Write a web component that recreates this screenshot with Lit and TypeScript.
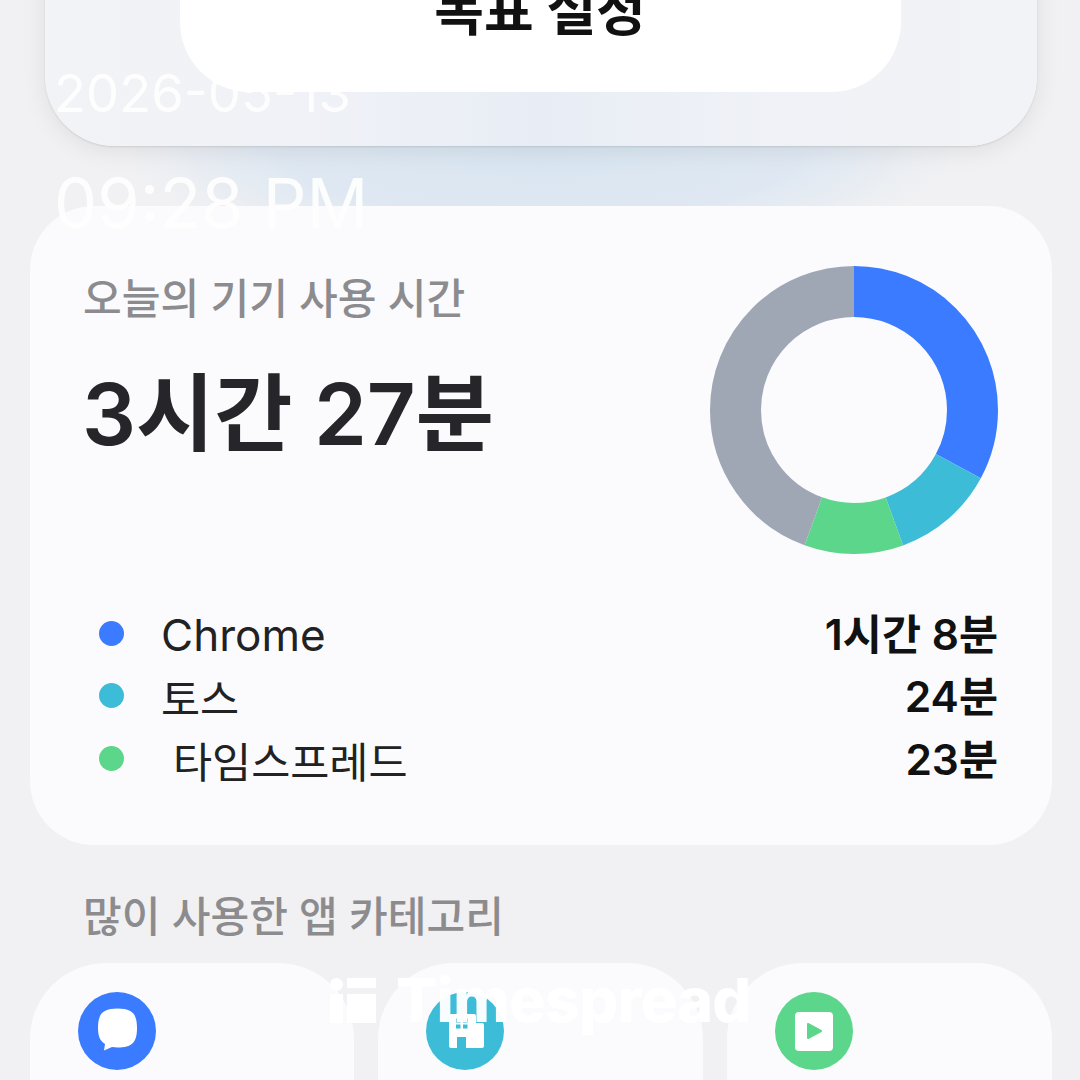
import { LitElement, html, css, svg } from 'lit';
import { customElement } from 'lit/decorators.js';

const USAGE = [
  { name: 'Chrome', time: '1시간 8분', minutes: 68, color: '#3a7bff' },
  { name: '토스', time: '24분', minutes: 24, color: '#3dbcd8' },
  { name: ' 타임스프레드', time: '23분', minutes: 23, color: '#5cd68a' },
];
const TOTAL_MINUTES = 207;
const REST_COLOR = '#9fa7b5';

@customElement('usage-donut')
export class UsageDonut extends LitElement {
  static styles = css`
    :host {
      display: block;
      width: 288px;
      height: 288px;
    }
    svg {
      display: block;
    }
  `;

  render() {
    const r = 118.5;
    const circ = 2 * Math.PI * r;
    let offset = 0;
    const rest = TOTAL_MINUTES - USAGE.reduce((s, u) => s + u.minutes, 0);
    const parts = [...USAGE, { minutes: rest, color: REST_COLOR }];
    return html`<svg width="288" height="288" viewBox="0 0 288 288">
      <g transform="rotate(-90 144 144)">
        ${parts.map((p) => {
          const len = (p.minutes / TOTAL_MINUTES) * circ;
          const seg = svg`<circle cx="144" cy="144" r="${r}" fill="none" stroke="${p.color}" stroke-width="51"
            stroke-dasharray="${len} ${circ - len}" stroke-dashoffset="${-offset}"></circle>`;
          offset += len;
          return seg;
        })}
      </g>
    </svg>`;
  }
}

@customElement('app-root')
export class AppRoot extends LitElement {
  static styles = css`
    :host {
      display: block;
      width: 1080px;
      height: 1080px;
      overflow: hidden;
      position: relative;
      background: #f1f1f3;
      font-family: Inter, 'Noto Sans CJK KR', sans-serif;
    }

    .glow {
      position: absolute;
      left: 130px;
      top: 40px;
      width: 820px;
      height: 220px;
      background: radial-gradient(ellipse at center, #d8e5f1 0%, #dfe8f2 45%, rgba(241, 241, 243, 0) 72%);
    }

    .page {
      position: relative;
      display: flex;
      flex-direction: column;
      padding: 0 28px 0 30px;
    }

    .goal-card {
      margin: -110px 15px 0;
      height: 256px;
      box-sizing: border-box;
      border-radius: 70px;
      background: linear-gradient(90deg, #f2f3f6 0%, #f0f2f7 25%, #e8edf5 50%, #f0f2f7 75%, #f2f3f6 100%);
      box-shadow: 0 1px 2px rgba(0, 0, 0, 0.1), 0 5px 24px rgba(0, 0, 0, 0.08);
      display: flex;
      justify-content: center;
    }
    .goal-btn {
      position: relative;
      z-index: 2;
      width: 721px;
      height: 202px;
      margin-left: -2px;
      border-radius: 70px;
      background: #fff;
      display: flex;
      align-items: flex-end;
      justify-content: center;
      padding-bottom: 48px;
      box-sizing: border-box;
      font-size: 54px;
      line-height: 64px;
      font-weight: 700;
      color: #111;
    }

    .usage-card {
      margin-top: 60px;
      height: 639px;
      box-sizing: border-box;
      border-radius: 64px;
      background: #fbfbfe;
      padding: 60px 54px 0;
      display: flex;
      flex-direction: column;
    }
    .usage-top {
      display: flex;
      justify-content: space-between;
    }
    .usage-title {
      padding-top: 2px;
      margin-left: -1px;
      font-size: 42.1px;
      line-height: 62px;
      font-weight: 500;
      color: #8c8c8f;
    }
    .usage-total {
      margin: 30px 0 0 -2px;
      font-size: 85px;
      line-height: 110px;
      font-weight: 600;
      color: #26262a;
    }
    .legend {
      margin-top: 48px;
      display: flex;
      flex-direction: column;
    }
    .legend-row {
      display: flex;
      align-items: center;
      height: 62.5px;
      font-size: 42.5px;
      color: #222;
    }
    .dot {
      width: 25px;
      height: 25px;
      border-radius: 50%;
      margin: 0 37px 0 15px;
    }
    .legend-name {
      flex: 1;
      padding-top: 2px;
      white-space: pre;
    }
    .legend-name.latin {
      padding-top: 4px;
      font-size: 44px;
    }
    .legend-time {
      padding-bottom: 4px;
      font-weight: 600;
      color: #111;
    }

    .section-title {
      margin: 41px 0 0 53px;
      font-size: 42.1px;
      line-height: 62px;
      font-weight: 500;
      color: #8c8c8f;
    }
    .categories {
      margin-top: 15px;
      display: grid;
      grid-template-columns: 324px 325px 1fr;
      gap: 24px;
    }
    .cat-card {
      height: 300px;
      box-sizing: border-box;
      padding: 29px 48px;
      border-radius: 76px;
      background: #fbfbfe;
    }
    .cat-icon {
      display: block;
      width: 78px;
      height: 78px;
    }

    .date,
    .time {
      position: absolute;
      left: 54px;
      z-index: 1;
      color: #fff;
      opacity: 0.92;
      font-family: Inter, sans-serif;
      white-space: nowrap;
    }
    .date {
      top: 61px;
      font-size: 52.5px;
      line-height: 64px;
    }
    .time {
      top: 160px;
      font-size: 68.5px;
      line-height: 88px;
    }
    .watermark {
      position: absolute;
      left: 330px;
      top: 968px;
      display: flex;
      align-items: center;
      gap: 20px;
      color: rgba(255, 255, 255, 0.96);
      font-family: Inter, sans-serif;
      font-weight: 800;
      font-size: 61px;
      line-height: 64px;
      letter-spacing: -0.7px;
      z-index: 3;
    }
    .watermark svg {
      display: block;
    }
  `;

  render() {
    return html`
      <div class="glow"></div>
      <div class="page">
        <div class="goal-card">
          <div class="goal-btn">목표 설정</div>
        </div>

        <div class="usage-card">
          <div class="usage-top">
            <div>
              <div class="usage-title">오늘의 기기 사용 시간</div>
              <div class="usage-total">3시간 27분</div>
            </div>
            <usage-donut></usage-donut>
          </div>
          <div class="legend">
            ${USAGE.map(
              (u) => html`<div class="legend-row">
                <span class="dot" style="background:${u.color}"></span>
                <span class="legend-name ${u.name === 'Chrome' ? 'latin' : ''}">${u.name}</span>
                <span class="legend-time">${u.time}</span>
              </div>`
            )}
          </div>
        </div>

        <div class="section-title">많이 사용한 앱 카테고리</div>
        <div class="categories">
          <div class="cat-card">
            <svg class="cat-icon" viewBox="0 0 78 78">
              <circle cx="39" cy="39" r="39" fill="#3a7bff"></circle>
              <path fill="#fff" d="M39.5 16.5C25 16.5 20 21.5 20 36c0 8 2 13 7 16l-1 6.5 8-3.5c1.5.3 3.5.5 5.5.5C54 55.5 59 50.5 59 36 59 21.5 54 16.5 39.5 16.5z"></path>
            </svg>
          </div>
          <div class="cat-card">
            <svg class="cat-icon" viewBox="0 0 78 78">
              <circle cx="39" cy="39" r="39" fill="#3dbcd8"></circle>
              <path fill="#fff" d="M25 22h23a2 2 0 0 1 2 2v7h6a2 2 0 0 1 2 2v21a2 2 0 0 1-2 2H40V45h-9v11h-6a2 2 0 0 1-2-2V24a2 2 0 0 1 2-2z"></path>
              <path fill="#3dbcd8" d="M30 26.5h4.5v4H30zM37 26.5h4.5v4H37zM30 32.5h4.5v4H30zM37 32.5h4.5v4H37z"></path>
            </svg>
          </div>
          <div class="cat-card">
            <svg class="cat-icon" viewBox="0 0 78 78">
              <circle cx="39" cy="39" r="39" fill="#5cd68a"></circle>
              <rect x="20" y="20" width="38" height="39" rx="4" fill="#fff"></rect>
              <path fill="#5cd68a" stroke="#5cd68a" stroke-width="2" stroke-linejoin="round" d="M33 32v14l13-7z"></path>
            </svg>
          </div>
        </div>
      </div>

      <div class="date">2026-05-13</div>
      <div class="time">09:28 PM</div>
      <div class="watermark">
        <svg width="46" height="45" viewBox="0 0 46 45" fill="#fff">
          <circle cx="6.5" cy="6.5" r="6.5"></circle>
          <rect x="0" y="16" width="13" height="29"></rect>
          <rect x="17" y="0" width="29" height="10"></rect>
          <rect x="17" y="16" width="29" height="29"></rect>
        </svg>
        <span>Timespread</span>
      </div>
    `;
  }
}
